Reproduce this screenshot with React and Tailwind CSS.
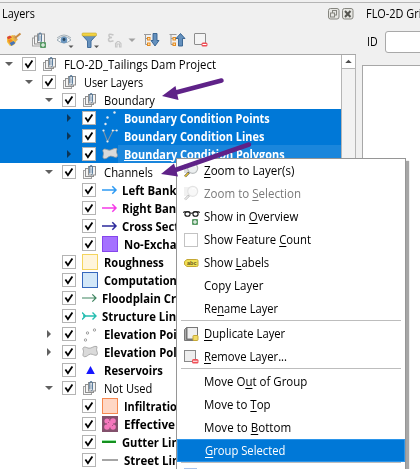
import { useLayoutEffect, useRef } from "react";

function Txt({ children, w, className = "" }) {
  const ref = useRef(null);
  useLayoutEffect(() => {
    const el = ref.current;
    el.style.transform = `scaleX(${w / el.offsetWidth})`;
  }, [w]);
  return (
    <span className="inline-block shrink-0 whitespace-pre" style={{ width: w }}>
      <span ref={ref} className={"inline-block origin-left " + className}>
        {children}
      </span>
    </span>
  );
}

function Arrow({ kind, light }) {
  return (
    <svg width="18" height="18" viewBox="0 0 18 18" className="shrink-0">
      {kind === "open" && <path d="M5 7h8l-4 4z" fill="#606060" />}
      {kind === "closed" && <path d="M7 5v8l4-4z" fill={light ? "#0b3557" : "#606060"} />}
    </svg>
  );
}

function Check() {
  return (
    <svg width="14" height="14" viewBox="0 0 14 14" className="ml-1 shrink-0">
      <rect x=".5" y=".5" width="13" height="13" fill="#fff" stroke="#b4b4b4" />
      <path d="M3.4 6.6 5.900 10.200 10.400 3.400" fill="none" stroke="#000" strokeWidth="1.800" />
    </svg>
  );
}

function GroupShape() {
  return (
    <>
      <rect x="1.500" y="6.500" width="8" height="8" fill="#f7f7f7" stroke="#a0a0a0" />
      <rect x="3.500" y="4.500" width="8" height="8" fill="#f3f3f3" stroke="#8f8f8f" />
      <rect x="6.500" y="2.500" width="7" height="8.500" fill="#f3f3f3" stroke="#8f8f8f" />
      <path d="M7.800 9.500V3q0-1.500 1.300-1.500T10.400 3v6.500q0 1-1 1.200" fill="none" stroke="#4a6f92" strokeWidth="1" />
      <path d="M9.100 4.500V9" stroke="#8faac2" strokeWidth=".8" />
    </>
  );
}

const colors = { left: "#2f9bf4", right: "#f53be8", cross: "#2d2a9c", flood: "#3f8560" };

function Icon({ name }) {
  const c = colors[name];
  return (
    <svg width="16" height="16" viewBox="0 0 16 16" className="shrink-0">
      {name === "group" && <GroupShape />}
      {name === "points" && (
        <g fill="#fff" stroke="#888" strokeWidth=".8">
          <circle cx="5.500" cy="7" r="1.200" /><circle cx="3.500" cy="14" r="1.200" /><circle cx="12.500" cy="4" r="1.200" />
        </g>
      )}
      {name === "pointsSel" && (
        <g fill="#e5eaf0">
          <circle cx="5.500" cy="7.500" r="1.200" /><circle cx="3.500" cy="14" r="1.200" /><circle cx="12.500" cy="2.500" r="1.200" />
        </g>
      )}
      {name === "lines" && (
        <g>
          <path d="M1.500 3 5.500 13.500 11 2.500h4" fill="none" stroke="#7c94a8" strokeWidth="1.100" />
          <g fill="#eee"><circle cx="1.500" cy="2.500" r="1.100" /><circle cx="5.500" cy="13.500" r="1.100" /><circle cx="10.800" cy="2.500" r="1.100" /><circle cx="14.700" cy="2.500" r="1.100" /></g>
        </g>
      )}
      {name === "poly" && (
        <path d="M1 4C2.500 2 4.500 3.800 7 4.200S12 1.500 14.800 2.500c.8.500-.8 2.500 0 4.500 1 2 1 4-.8 4.300-2 .2-3-1.300-5.500-1.200-2.500.2-3.500 3-6 2.600C-.5 12 1.800 9 1.500 7 1.300 5.800.5 5 1 4z" fill="#dadada" stroke="#9a9a9a" strokeWidth=".8" />
      )}
      {c && <path d="M0 8h14M10.300 4.300 14 8l-3.700 3.700" fill="none" stroke={c} strokeWidth={name === "flood" ? 1.2 : 1.5} />}
      {name === "structure" && <path d="M0 4.500 3.500 8 0 11.500M1 8h13M10.500 4.500 14 8l-3.500 3.500" fill="none" stroke="#25bdb0" strokeWidth="1.400" />}
      {name === "noex" && <rect x=".5" y=".5" width="15" height="15" fill="#a571ff" stroke="#8545ec" />}
      {name === "rough" && <rect x=".5" y=".5" width="15" height="15" fill="#fff5dc" stroke="#f4d45c" />}
      {name === "comp" && <rect x=".5" y=".5" width="15" height="15" fill="#d3e8f8" stroke="#3568bd" />}
      {name === "infil" && <rect x=".5" y=".5" width="15" height="15" fill="#ffd7c5" stroke="#f58850" />}
      {name === "eff" && (
        <g>
          <rect width="16" height="16" fill="#83506c" />
          <g fill="#f577bd"><circle cx="5" cy="5" r="2.600" /><circle cx="11" cy="5" r="2.800" /><circle cx="5" cy="11" r="2.800" /><circle cx="11" cy="11" r="2.800" /><circle cx="8" cy="8" r="3" /></g>
          <path d="M7.500 2v2M3 8h2M11 8h2M8 12v2M6 6l1 1M10 9l1 1" stroke="#a85584" />
        </g>
      )}
      {name === "gutter" && <g><path d="M0 7h14" stroke="#2fd04a" strokeWidth="1" /><path d="M0 8h14" stroke="#15901f" strokeWidth="2" /></g>}
      {name === "street" && <path d="M0 8h16" stroke="#a5a5a5" strokeWidth="2" />}
      {name === "res" && <path d="M8.500 4 12.800 12H4.200z" fill="#1616ff" />}
    </svg>
  );
}

const rows = [
  [0, "open", "group", "FLO-2D_Tailings Dam Project", 152],
  [1, "open", "group", "User Layers", 59],
  [2, "open", "group", "Boundary", 51],
  [3, "closed", "pointsSel", "Boundary Condition Points", 146, "sel"],
  [3, "closed", "lines", "Boundary Condition Lines", 140, "sel"],
  [3, "closed", "poly", "Boundary Condition Polygons", 161, "cur"],
  [2, "open", "group", "Channels", 49],
  [3, "", "left", "Left Bank", 54, "line"],
  [3, "", "right", "Right Bank", 61, "line"],
  [3, "", "cross", "Cross Sections", 81, "line"],
  [3, "", "noex", "No-Exchange", 73, "b"],
  [2, "", "rough", "Roughness", 60, "b"],
  [2, "", "comp", "Computational", 83, "b"],
  [2, "", "flood", "Floodplain Cross", 92, "line"],
  [2, "", "structure", "Structure Lines", 86, "line"],
  [2, "closed", "points", "Elevation Points", 91, "b"],
  [2, "closed", "poly", "Elevation Polygons", 105, "b"],
  [2, "", "res", "Reservoirs", 59, "b"],
  [2, "open", "group", "Not Used", 48],
  [3, "", "infil", "Infiltration", 60, "b"],
  [3, "", "eff", "Effective", 51, "b"],
  [3, "", "gutter", "Gutter Lines", 69, "line"],
  [3, "", "street", "Street Lines", 68, "b"],
];
const indents = ["pl-0", "pl-5", "pl-10", "pl-[60px]"];

function Row({ r }) {
  const [lvl, arrow, icon, text, w, kind] = r;
  const sel = kind === "sel" || kind === "cur";
  return (
    <div className={"flex h-[18px] shrink-0 items-center " + indents[lvl] + (sel ? " bg-[#0078d7] text-white" : "")}>
      <Arrow kind={arrow} light={sel} />
      <Check />
      <div className="ml-[6px] flex"><Icon name={icon} /></div>
      <div className={"flex h-full items-center pt-px " + (kind === "line" ? "pl-[4px]" : "pl-[6px]") + (kind === "cur" ? " flex-1 bg-[#1a86dc]" : "")}>
        <Txt w={w} className={(kind ? "font-bold text-[12px] " : "text-[12.5px] ") + (kind === "cur" ? "underline" : "")}>{text}</Txt>
      </div>
    </div>
  );
}

function Plus({ x, y }) {
  return (
    <g>
      <rect x={x} y={y} width="6" height="6" rx="1" fill="#5b9c68" />
      <path d={`M${x + 1} ${y + 3}h4M${x + 3} ${y + 1}v4`} stroke="#fff" />
    </g>
  );
}

function Toolbar() {
  return (
    <svg width="214" height="24" viewBox="0 26 214 24" className="block">
      <g>
        <path d="M7 35l6-2 4 5-3 5-4 1-3-4z" fill="#f5c13d" />
        <path d="M7 35l3-1.500 2 2-4 2z" fill="#dc4635" />
        <path d="M8 38l3-1 2 2-4 2z" fill="#f08c24" />
        <path d="M9.500 41l4-2 2 2-4 3z" fill="#4774b8" />
        <path d="M12 34l3 5 3-1-3-5z" fill="#dfaa55" />
        <path d="M15 36l5.500-4.500" stroke="#c88b42" strokeWidth="2" />
      </g>
      <g transform="translate(31 29.500)"><GroupShape /></g>
      <Plus x={40} y={40} />
      <g>
        <path d="M57 38q7-7 14 0-7 6-14 0z" fill="#f7fafc" stroke="#9baab5" />
        <path d="M57 36q7-6 14 0" fill="none" stroke="#a5b0b8" />
        <circle cx="64" cy="38" r="3.300" fill="#6b96bf" /><circle cx="64" cy="37.500" r="1.400" fill="#28465f" />
        <path d="M68.500 43.500h5l-2.500 2.500z" fill="#555" />
      </g>
      <g>
        <path d="M82.500 33.500h13.500L91 39v6.500h-3.500V39z" fill="#6792bd" stroke="#426e9d" />
        <rect x="82" y="31" width="14.500" height="3" rx="1" fill="#f2d343" stroke="#c6a72d" strokeWidth=".6" />
        <path d="M94 43.500h5l-2.500 2.500z" fill="#555" />
      </g>
      <g fill="none" stroke="#c6c6c6" strokeWidth="1.500">
        <path d="M113.500 33q-5-2-4.500.8 0 1.500 3 1.700-4 .3-3.500 2.500.5 2.500 5 .7" />
        <path d="M115.500 45v-3.500l2-2h1.500l2 2V45h-1.500v-3h-2.500v3z" strokeWidth="1.100" />
      </g>
      <path d="M128.500 36.500h7l-3.500 3.500z" fill="#a1a1a1" />
      {[0, 25.5].map((dx) => (
        <g key={dx} transform={`translate(${dx} 0)`}>
          <path d="M144 32.500h7M145.500 33v9.500h3M145.500 36.500h3" fill="none" stroke="#9a9a9a" />
          <rect x="147.500" y="35.500" width="2.500" height="2.500" fill="#ffe0a6" stroke="#e58a20" />
          <rect x="147.500" y="41" width="2.500" height="2.500" fill="#ffe0a6" stroke="#e58a20" />
          <path d={dx ? "M153 44v-7.500h-2.500l4.500-5 4.500 5H157V44z" : "M153 31.500h4V38.500h2l-4 5.500-4-5.500h2z"} fill="#6490bd" stroke="#315f8d" strokeWidth=".9" />
        </g>
      ))}
      <rect x="194.500" y="31.500" width="11" height="11" rx=".5" fill="#f4f4f4" stroke="#8d8d8d" />
      <rect x="201.500" y="40.500" width="6" height="4" rx="1.500" fill="#ef4d55" /><path d="M202.500 42.500h4" stroke="#fff" />
    </svg>
  );
}

function MenuIcon({ name }) {
  const mag = (
    <g>
      <rect x="1" y="2" width="8" height="9" fill="#ddd" />
      <circle cx="9.700" cy="6.300" r="5" fill="#eceff0" stroke="#b8bcbd" strokeWidth="1.200" />
      <path d="M9 4q3-2 4 1" fill="none" stroke="#fff" />
      <path d="M6 10.500 2 14.500" stroke="#444" strokeWidth="2.400" />
      <path d="M5.500 11 2 14.500" stroke="#ebc83b" strokeWidth="1.400" />
    </g>
  );
  return (
    <svg width="18" height="18" viewBox="0 0 18 18" className="shrink-0">
      {name === "zoom" && mag}
      {name === "zoomOff" && <g opacity=".4" className="grayscale">{mag}</g>}
      {name === "glasses" && (
        <g fill="none" stroke="#111">
          <path d="M.8 5V3.800h5.500l1.500 1.400h1.400l1.500-1.400h5.500V5" strokeWidth="1" />
          <ellipse cx="4.500" cy="6" rx="2.600" ry="2.300" strokeWidth="1.100" />
          <ellipse cx="12.500" cy="6" rx="2.600" ry="2.300" strokeWidth="1.100" />
        </g>
      )}
      {name === "glasses" && <Plus x={9} y={11} />}
      {name === "box" && <rect x="1.500" y="2.500" width="13" height="13" fill="#fff" stroke="#c3c3c3" />}
      {name === "abc" && (
        <g>
          <path d="M4 5.500h9.500q1.500 0 1.500 1v5q0 1-1.500 1H4L1.500 10.500v-3z" fill="#f0e256" stroke="#c4a733" />
          <text x="4" y="11.200" fontSize="5.500" fontWeight="700" fill="#665720" fontFamily="Liberation Sans, sans-serif">abc</text>
        </g>
      )}
      {name === "dup" && (
        <g>
          <path d="M1.500 4.500 3.500 2.500v12h9l-1.500 1H1.500z" fill="#aaa" stroke="#777" />
          <rect x="4" y="2.500" width="10.500" height="11.500" fill="#efefef" stroke="#777" />
          <rect x="10" y="10.500" width="5" height="5" rx=".8" fill="#f2db65" stroke="#c8a936" />
        </g>
      )}
      {name === "rem" && (
        <g>
          <rect x="1.500" y="2.500" width="11" height="11" fill="#eee" stroke="#888" />
          <rect x="9" y="11" width="6.500" height="4.500" rx="1.500" fill="#ef5058" /><path d="M10 13.250h4.500" stroke="#fff" />
        </g>
      )}
    </svg>
  );
}

const U = ({ children }) => <span className="underline underline-offset-2">{children}</span>;

function Item({ icon, w, children, active, dim }) {
  return (
    <div className={"flex h-[23px] shrink-0 items-center pl-[6px] " + (active ? "border border-[#2b95ea] bg-[#0078d7] pl-[5px] text-white" : dim ? "text-[#7a7a7a]" : "")}>
      <MenuIcon name={icon} />
      <div className="ml-[3px] flex"><Txt w={w} className="text-[12.5px]">{children}</Txt></div>
    </div>
  );
}
const Sep = () => <div className="mx-1 h-px shrink-0 bg-[#bdbdbd]" />;

export default function App() {
  return (
    <div className="relative flex h-[469px] w-[420px] overflow-hidden bg-[#f0f0f0] font-['Open_Sans','Noto_Sans',sans-serif] text-[12.5px] leading-[18px] text-black">
      <div className="flex w-[356px] shrink-0 flex-col">
        <div className="mt-[2px] flex h-[26px] shrink-0 items-start border-t border-[#b5b5b5] pl-[2px] pt-[2px]">
          <Txt w={33}>Layers</Txt>
          <svg width="26" height="12" viewBox="0 0 26 12" className="ml-auto mr-[2px] mt-[3px]">
            <g fill="#e7e7e3" stroke="#85857f">
              <rect x=".5" y=".5" width="10.500" height="10.500" rx="2" />
              <rect x="14.500" y=".5" width="10.500" height="10.500" rx="2" />
              <rect x="4.500" y="2.500" width="4" height="4.500" /><rect x="2.500" y="5" width="4" height="4" />
            </g>
            <path d="M17 3l5.500 6M22.500 3 17 9" stroke="#565651" strokeWidth="2" />
          </svg>
        </div>
        <div className="h-[26px] shrink-0"><Toolbar /></div>
        <div className="flex min-h-0 flex-1 border-t border-[#a7a7a7] bg-white">
          <div className="flex min-w-0 flex-1 flex-col overflow-hidden">
            {rows.map((r) => <Row key={r[3]} r={r} />)}
          </div>
          <div className="w-[15px] shrink-0 border-x border-[#b5b5b5] bg-[#f2f2f2]">
            <svg width="13" height="14" viewBox="0 0 13 14" className="block border-b border-[#b5b5b5] bg-white">
              <path d="M3 8.500 6.500 5 10 8.500z" fill="#505050" />
            </svg>
          </div>
        </div>
      </div>
      <div className="mt-[2px] flex flex-1 flex-col border-t border-[#b5b5b5] pl-[6px]">
        <div className="flex h-[26px] shrink-0 items-start pl-1 pt-[2px]"><Txt w={62}>FLO-2D Grid</Txt></div>
        <div className="mt-[1px] flex h-[24px] shrink-0 items-center pl-[5px]">
          <Txt w={11}>ID</Txt>
          <div className="ml-[7px] h-[22px] w-[60px] shrink-0 rounded-[3px] border border-[#a9a9a9] bg-white" />
        </div>
        <div className="mt-[11px] flex-1 border-l border-t border-[#a7a7a7] bg-white" />
      </div>

      <div className="absolute left-[176px] top-[158px] flex h-[320px] w-[230px] flex-col border border-[#969696] bg-white shadow-[3px_3px_1px_#858585bb]">
        <Item icon="zoom" w={90}><U>Z</U>oom to Layer(s)</Item>
        <Item icon="zoomOff" w={97} dim>Zoom to <U>S</U>election</Item>
        <Item icon="glasses" w={94}>Show in <U>O</U>verview</Item>
        <Item icon="box" w={107}>Show Feature <U>C</U>ount</Item>
        <Item icon="abc" w={65}>Show <U>L</U>abels</Item>
        <Item w={59}>Copy Layer</Item>
        <Item w={74}>Re<U>n</U>ame Layer</Item>
        <Sep />
        <div className="pt-[1px]"><Item icon="dup" w={81}><U>D</U>uplicate Layer</Item></div>
        <Item icon="rem" w={83}><U>R</U>emove Layer...</Item>
        <Sep />
        <div className="pt-[1px]"><Item w={103}>Move O<U>u</U>t of Group</Item></div>
        <Item w={67}>Move to <U>T</U>op</Item>
        <Item w={87}>Move to <U>B</U>ottom</Item>
        <Item w={80} active><U>G</U>roup Selected</Item>
        <Sep />
        <div className="ml-[7px] mt-[5px] h-2 w-[13px] bg-[#a9c3ea]" />
      </div>

      <svg width="420" height="469" viewBox="0 0 420 469" className="pointer-events-none absolute left-0 top-0">
        <g stroke="#5f2288" fill="#5f2288">
          <path d="M174 93 221.500 80.500" strokeWidth="4.500" strokeLinecap="round" />
          <path d="M162 96 175.500 86 178.500 100z" stroke="none" />
          <path d="M174 170.500 249 144.500" strokeWidth="4.500" strokeLinecap="round" />
          <path d="M161 174 174 163.500 178 176.500z" stroke="none" />
        </g>
      </svg>
    </div>
  );
}
